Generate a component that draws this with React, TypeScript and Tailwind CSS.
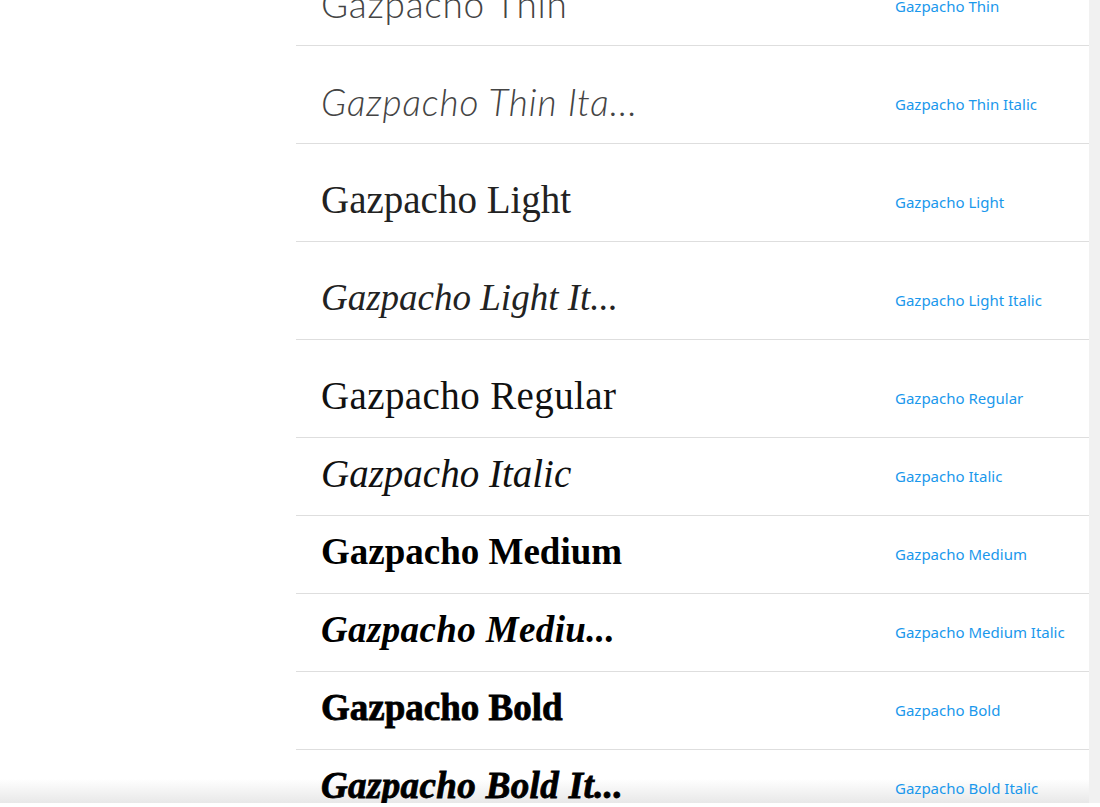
const rows = [
  { sample: "Gazpacho Thin", label: "Gazpacho Thin", tall: true, cls: "font-['Lato',sans-serif] font-light text-[#444] text-[37px] tracking-[0.02em]" },
  { sample: "Gazpacho Thin Ita...", label: "Gazpacho Thin Italic", tall: true, cls: "font-['Lato',sans-serif] font-light italic text-[#444] text-[37px] tracking-[0.024em]" },
  { sample: "Gazpacho Light", label: "Gazpacho Light", tall: true, cls: "font-['Liberation_Serif',serif] font-normal text-[#222] text-[39px]" },
  { sample: "Gazpacho Light It...", label: "Gazpacho Light Italic", tall: true, cls: "font-['Liberation_Serif',serif] font-normal italic text-[#222] text-[37px]" },
  { sample: "Gazpacho Regular", label: "Gazpacho Regular", tall: true, cls: "font-['Liberation_Serif',serif] font-normal text-[#111] text-[39px] tracking-[0.01em]" },
  { sample: "Gazpacho Italic", label: "Gazpacho Italic", tall: false, cls: "font-['Liberation_Serif',serif] font-normal italic text-[#111] text-[39px]" },
  { sample: "Gazpacho Medium", label: "Gazpacho Medium", tall: false, cls: "font-['Liberation_Serif',serif] font-bold text-black text-[37px]" },
  { sample: "Gazpacho Mediu...", label: "Gazpacho Medium Italic", tall: false, cls: "font-['Liberation_Serif',serif] font-bold italic text-black text-[37px] tracking-[0.01em]" },
  { sample: "Gazpacho Bold", label: "Gazpacho Bold", tall: false, cls: "font-['Liberation_Serif',serif] font-bold text-black text-[37px] [-webkit-text-stroke:0.8px_black]" },
  { sample: "Gazpacho Bold It...", label: "Gazpacho Bold Italic", tall: false, cls: "font-['Liberation_Serif',serif] font-bold italic text-black text-[37px] tracking-[0.01em] [-webkit-text-stroke:0.8px_black]" },
];

export default function App() {
  return (
    <div className="w-[1100px] h-[807px] overflow-hidden bg-white flex flex-col">
      <div className="relative h-[803px] flex overflow-hidden">
        {/* bottom fade, sits under the list */}
        <div className="absolute left-0 right-0 bottom-0 h-[24px] bg-gradient-to-b from-white to-[#e8e8e8]" />

        <div className="w-[296px] shrink-0" />

        {/* font list, scrolled */}
        <div className="relative flex-1 -mt-[52px]">
          {rows.map((r) => (
            <div
              key={r.label}
              className={`border-b border-[#dedede] grid grid-cols-[599px_1fr] items-center ${r.tall ? "h-[98px] pt-[20px]" : "h-[78px]"}`}
            >
              <div className={`pl-[25px] mb-[5px] whitespace-nowrap leading-[1.15] ${r.cls}`}>
                {r.sample}
              </div>
              <div className="font-['Noto_Sans',sans-serif] text-[15px] text-[#1a98ec] whitespace-nowrap">
                {r.label}
              </div>
            </div>
          ))}
        </div>

        {/* vertical scrollbar track */}
        <div className="relative w-[11px] shrink-0 bg-[#f1f1f1]" />
      </div>
      <div className="h-[4px] bg-white" />
    </div>
  );
}
